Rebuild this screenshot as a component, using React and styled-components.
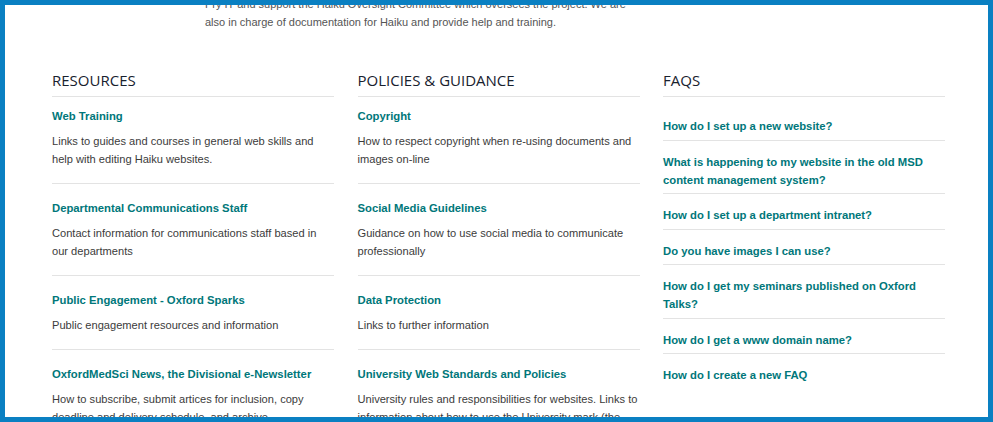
import React from "react";
import styled, { createGlobalStyle } from "styled-components";

const resources = [
  {
    title: "Web Training",
    text: "Links to guides and courses in general web skills and help with editing Haiku websites.",
  },
  {
    title: "Departmental Communications Staff",
    text: "Contact information for communications staff based in our departments",
  },
  {
    title: "Public Engagement - Oxford Sparks",
    text: "Public engagement resources and information",
  },
  {
    title: "OxfordMedSci News, the Divisional e-Newsletter",
    text: "How to subscribe, submit artices for inclusion, copy deadline and delivery schedule, and archive.",
  },
];

const policies = [
  {
    title: "Copyright",
    text: "How to respect copyright when re-using documents and images on-line",
  },
  {
    title: "Social Media Guidelines",
    text: "Guidance on how to use social media to communicate professionally",
  },
  {
    title: "Data Protection",
    text: "Links to further information",
  },
  {
    title: "University Web Standards and Policies",
    text: "University rules and responsibilities for websites. Links to information about how to use the University mark (the logo) and brand.",
  },
];

const faqs = [
  "How do I set up a new website?",
  "What is happening to my website in the old MSD content management system?",
  "How do I set up a department intranet?",
  "Do you have images I can use?",
  "How do I get my seminars published on Oxford Talks?",
  "How do I get a www domain name?",
  "How do I create a new FAQ",
];

const GlobalStyle = createGlobalStyle`
  html, body {
    margin: 0;
    padding: 0;
    background: #ffffff;
    overflow: hidden;
  }
  body {
    font-family: "Liberation Sans", Arial, sans-serif;
  }
`;

const App = () => {
  return (
    <>
      <GlobalStyle />
      <Page>
        <Intro>
          Pry IT and support the Haiku Oversight Committee which oversees the
          project. We are also in charge of documentation for Haiku and provide
          help and training.
        </Intro>
        <Columns>
          <Column>
            <Heading>Resources</Heading>
            <ItemList>
              {resources.map((item) => (
                <Item key={item.title}>
                  <ItemTitle href="#">{item.title}</ItemTitle>
                  <ItemText>{item.text}</ItemText>
                </Item>
              ))}
            </ItemList>
          </Column>
          <Column>
            <Heading>Policies &amp; Guidance</Heading>
            <ItemList>
              {policies.map((item) => (
                <Item key={item.title}>
                  <ItemTitle href="#">{item.title}</ItemTitle>
                  <ItemText>{item.text}</ItemText>
                </Item>
              ))}
            </ItemList>
          </Column>
          <Column>
            <Heading>FAQs</Heading>
            <FaqList>
              {faqs.map((q) => (
                <FaqItem key={q}>
                  <FaqLink href="#">{q}</FaqLink>
                </FaqItem>
              ))}
            </FaqList>
          </Column>
        </Columns>
      </Page>
      <Frame />
    </>
  );
};

const Frame = styled.div`
  position: fixed;
  inset: 0;
  border: 5px solid #0a80c2;
  pointer-events: none;
  z-index: 10;
`;

const Page = styled.div`
  margin-top: -5px;
  padding: 0 48px 0 52px;
`;

const Intro = styled.p`
  margin: 0 0 0 153px;
  max-width: 435px;
  font-size: 11px;
  line-height: 18px;
  color: #555555;
`;

const Columns = styled.div`
  display: grid;
  grid-template-columns: repeat(3, 1fr);
  column-gap: 23.5px;
  width: 893px;
  margin-top: 38px;
`;

const Column = styled.section`
  min-width: 0;
`;

const Heading = styled.h2`
  margin: 0;
  padding-bottom: 5px;
  border-bottom: 1px solid #e3e3e3;
  font-family: "Open Sans", "Liberation Sans", sans-serif;
  font-size: 15px;
  font-weight: 400;
  line-height: 22px;
  text-transform: uppercase;
  color: #18212e;
`;

const ItemList = styled.ul`
  list-style: none;
  margin: 0;
  padding: 0;
`;

const Item = styled.li`
  padding: 15px 0 15px;
  border-bottom: 1px solid #e3e3e3;

  &:first-child {
    padding-top: 10px;
  }
`;

const ItemTitle = styled.a`
  display: block;
  margin-bottom: 7px;
  font-size: 11.3px;
  font-weight: 700;
  line-height: 18px;
  color: #00777a;
  text-decoration: none;
`;

const ItemText = styled.p`
  margin: 0;
  max-width: 281px;
  font-size: 11.1px;
  line-height: 18px;
  color: #3b3b3b;
`;

const FaqList = styled.ul`
  list-style: none;
  margin: 0;
  padding: 0;
`;

const FaqItem = styled.li`
  padding: 12px 0 4.5px;
  border-bottom: 1px solid #e3e3e3;

  &:first-child {
    padding-top: 20px;
  }

  &:last-child {
    border-bottom: none;
  }
`;

const FaqLink = styled.a`
  display: block;
  font-size: 11.3px;
  font-weight: 700;
  line-height: 18px;
  color: #00777a;
  text-decoration: none;
`;

export default App;
